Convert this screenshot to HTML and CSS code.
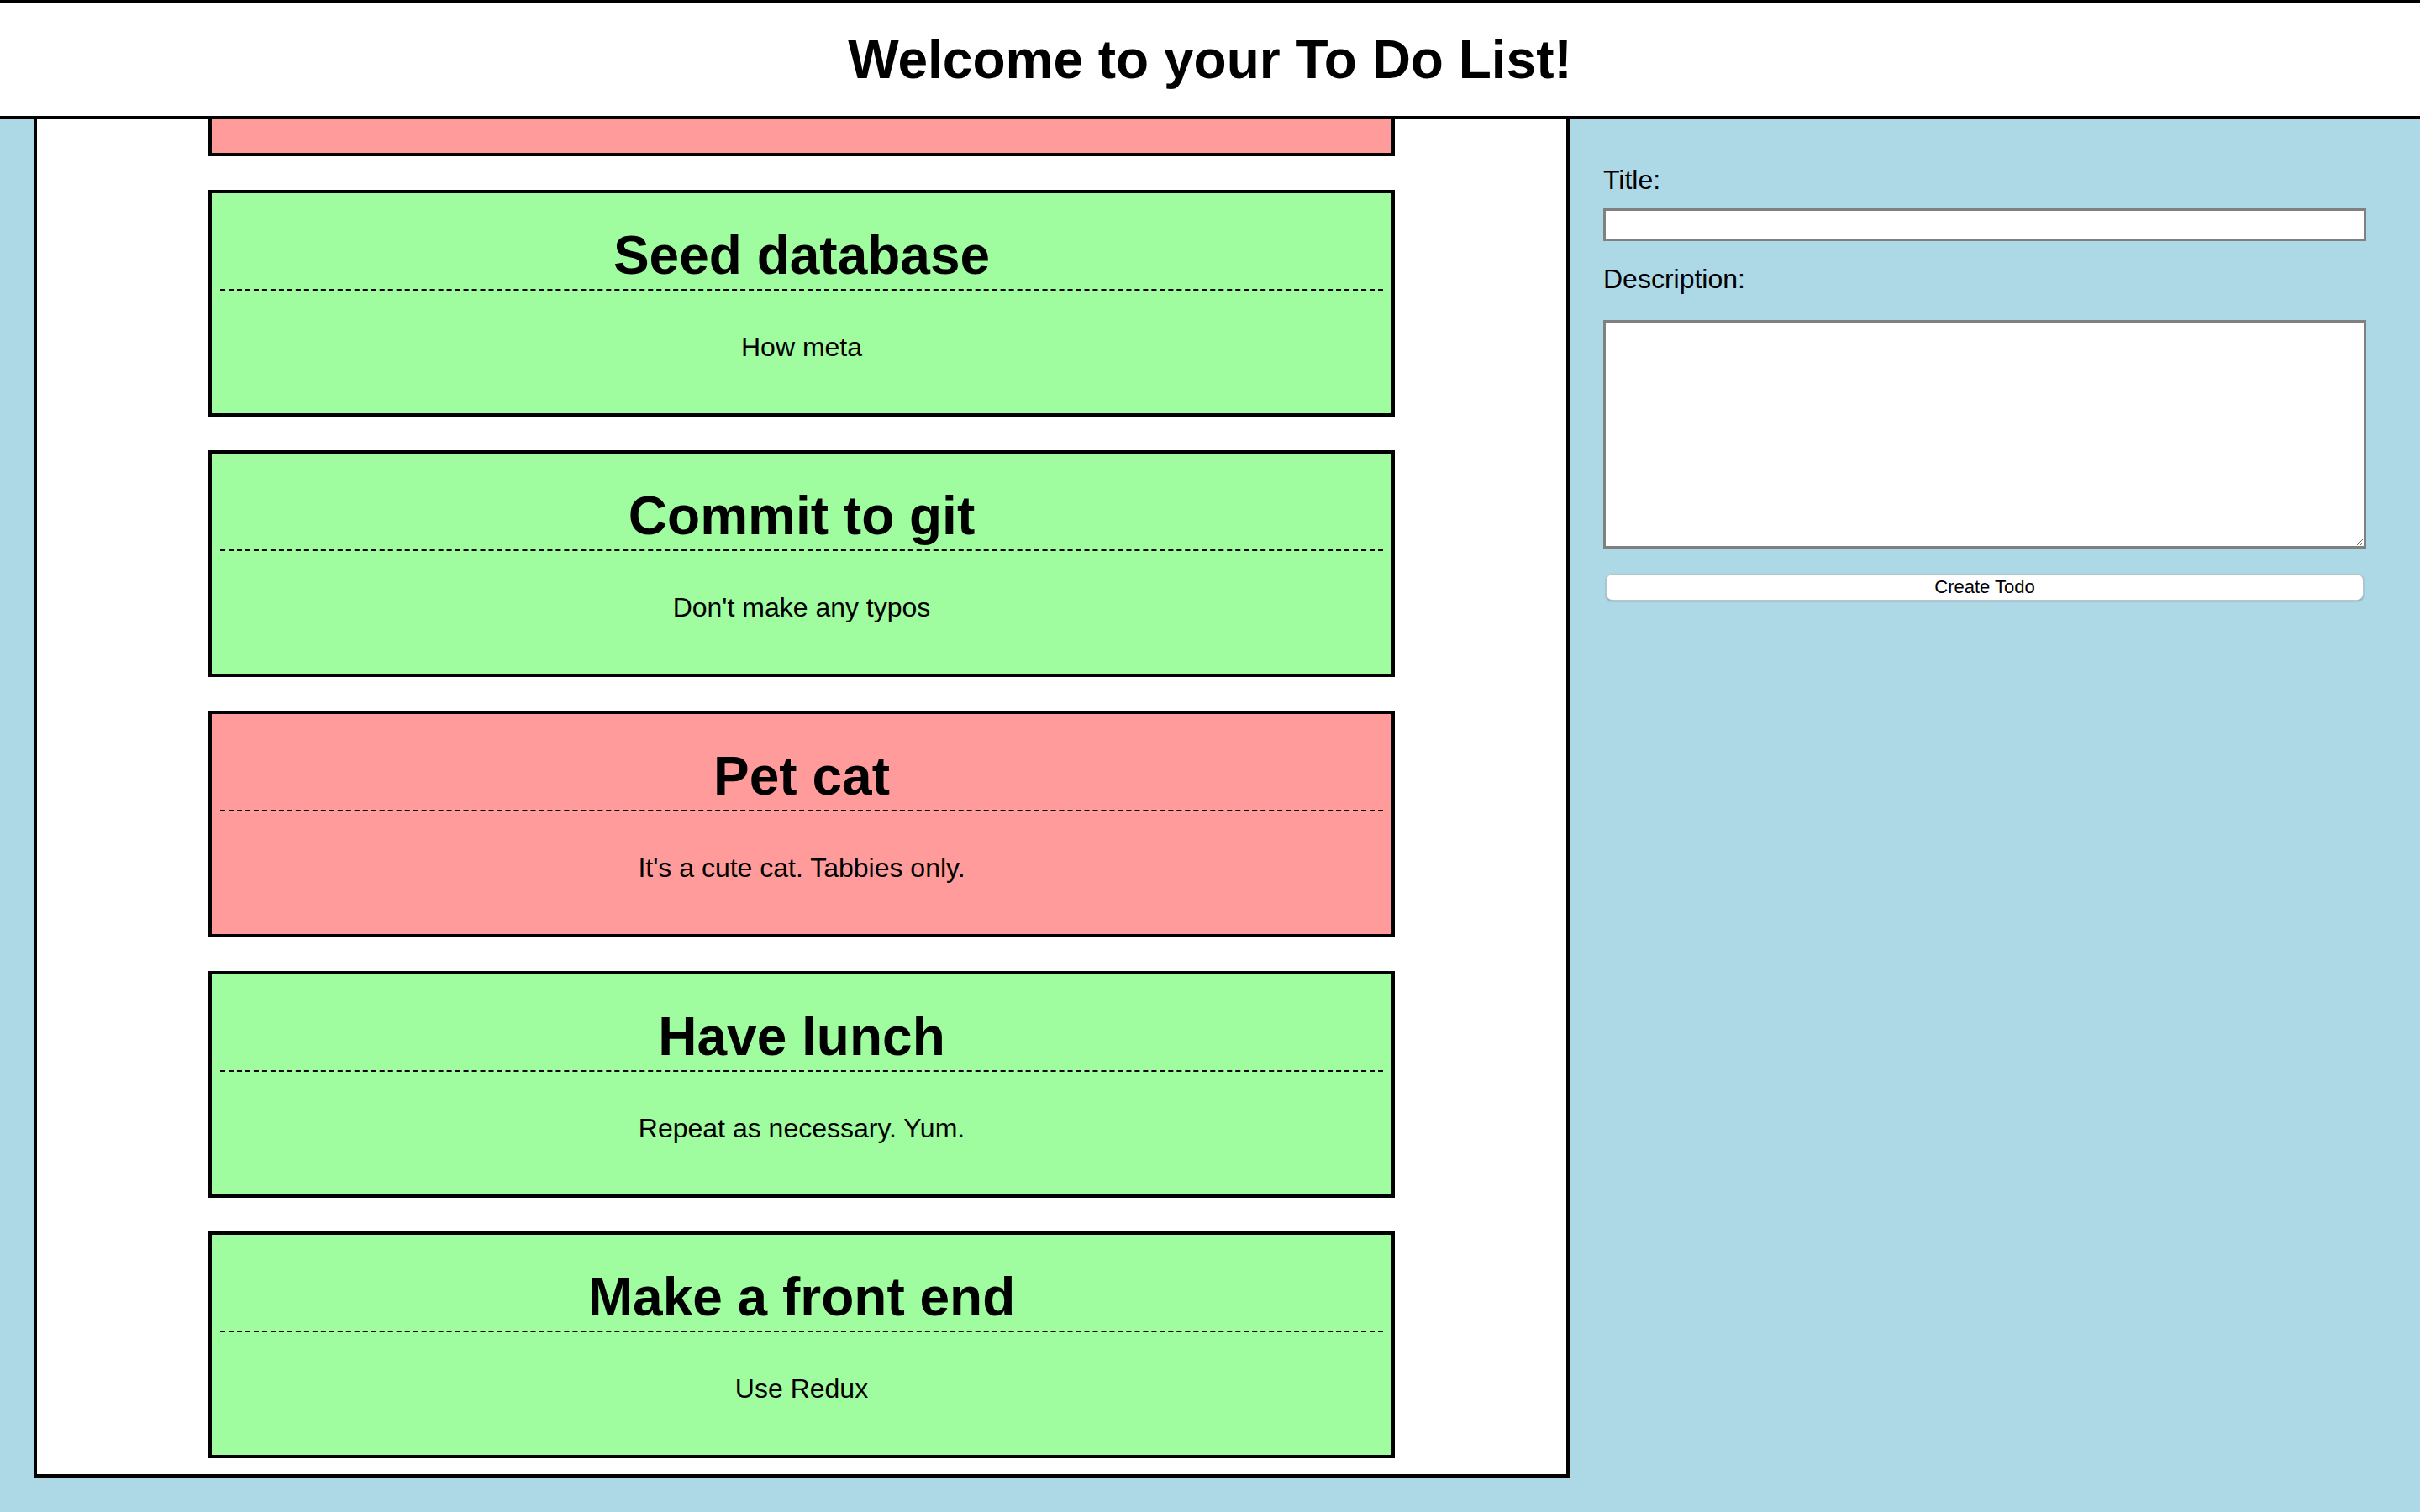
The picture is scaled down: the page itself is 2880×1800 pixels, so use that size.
FILE: index.html
```html
<!DOCTYPE html>
<html lang="en">
<head>
<meta charset="utf-8">
<title>To Do List</title>
<link rel="stylesheet" href="styles.css">
</head>
<body>
<header class="site-header">
  <h1 class="site-title">Welcome to your To Do List!</h1>
</header>
<main class="layout">
  <section class="todo-panel">
    <article class="todo todo-pending">
      <h2 class="todo-title">Write tests</h2>
      <p class="todo-desc">Make sure everything works</p>
    </article>
    <article class="todo todo-done">
      <h2 class="todo-title">Seed database</h2>
      <p class="todo-desc">How meta</p>
    </article>
    <article class="todo todo-done">
      <h2 class="todo-title">Commit to git</h2>
      <p class="todo-desc">Don't make any typos</p>
    </article>
    <article class="todo todo-pending">
      <h2 class="todo-title">Pet cat</h2>
      <p class="todo-desc">It's a cute cat. Tabbies only.</p>
    </article>
    <article class="todo todo-done">
      <h2 class="todo-title">Have lunch</h2>
      <p class="todo-desc">Repeat as necessary. Yum.</p>
    </article>
    <article class="todo todo-done">
      <h2 class="todo-title">Make a front end</h2>
      <p class="todo-desc">Use Redux</p>
    </article>
  </section>
  <aside class="form-panel">
    <form class="todo-form">
      <label class="field-label" for="title">Title:</label>
      <input class="field-input" id="title" type="text">
      <label class="field-label field-label-desc" for="desc">Description:</label>
      <textarea class="field-textarea" id="desc"></textarea>
      <button class="create-btn" type="button">Create Todo</button>
    </form>
  </aside>
</main>
</body>
</html>
```
FILE: styles.css
```css
* {
  box-sizing: border-box;
}

html, body {
  margin: 0;
  padding: 0;
}

body {
  background: #add8e6;
  font-family: "Liberation Sans", Arial, Helvetica, sans-serif;
  font-size: 32px;
  color: #000;
  height: 1800px;
  overflow: hidden;
}

.site-header {
  position: relative;
  z-index: 1;
  background: #fff;
  border-top: 4px solid #000;
  border-bottom: 4px solid #000;
  padding: 30px 0;
  text-align: center;
}

.site-title {
  margin: 0;
  font-size: 64px;
  line-height: 74px;
  font-weight: bold;
}

.layout {
  display: flex;
  align-items: flex-start;
}

.todo-panel {
  margin-left: 40px;
  width: 1828px;
  height: 1617px;
  background: #fff;
  border: 4px solid #000;
  border-top: none;
  padding-bottom: 19px;
  display: flex;
  flex-direction: column;
  justify-content: flex-end;
  align-items: center;
  gap: 40px;
  overflow: hidden;
}

.todo {
  flex: none;
  width: 1412px;
  border: 4px solid #000;
  text-align: center;
}

.todo-done {
  background: #9ffc9f;
}

.todo-pending {
  background: #ff9b9b;
}

.todo-title {
  margin: 37px 10px 0;
  padding-bottom: 3px;
  font-size: 64px;
  line-height: 74px;
  font-weight: bold;
  border-bottom: 2px dashed #000;
}

.todo-desc {
  margin: 49px 0 0;
  padding-bottom: 60px;
  font-size: 32px;
  line-height: 37px;
}

.form-panel {
  flex: 1;
  padding: 54px 64px 0 40px;
}

.todo-form {
  display: flex;
  flex-direction: column;
}

.field-label {
  display: block;
  font-size: 32px;
  line-height: 37px;
}

.field-label-desc {
  margin-top: 27px;
}

.field-input {
  margin-top: 15px;
  height: 39px;
  width: 100%;
  border: 3px solid #808080;
  background: #fff;
  font-family: inherit;
  font-size: 26px;
  padding: 0 6px;
}

.field-textarea {
  margin-top: 30px;
  height: 272px;
  width: 100%;
  border: 3px solid #808080;
  background: #fff;
  font-family: inherit;
  font-size: 26px;
  resize: both;
}

.create-btn {
  margin: 30px 3px 0;
  height: 32px;
  background: #fff;
  border: 1px solid #b8c4c8;
  border-radius: 8px;
  box-shadow: 0 1px 2px rgba(0, 0, 0, 0.25);
  font-family: "Liberation Sans", Arial, Helvetica, sans-serif;
  font-size: 22px;
  line-height: 30px;
  color: #000;
  padding: 0;
}
```
